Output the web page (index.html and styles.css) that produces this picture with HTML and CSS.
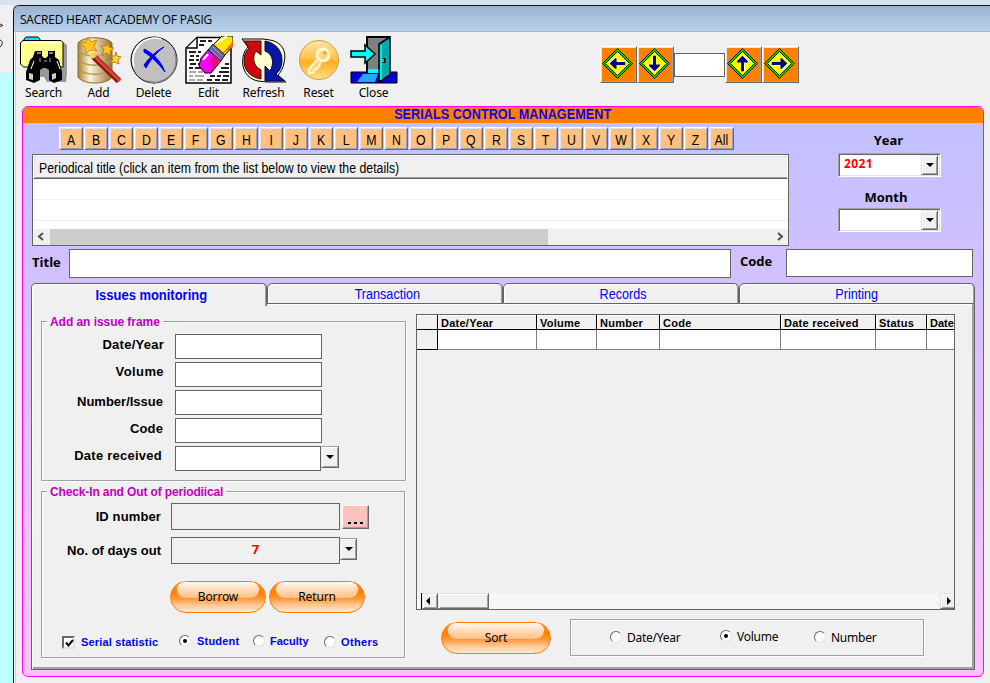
FILE: index.html
```html
<!DOCTYPE html>
<html lang="en">
<head>
<meta charset="utf-8">
<title>Serials Control Management</title>
<link rel="stylesheet" href="styles.css">
</head>
<body>
<div class="desktop">
  <div class="strip">
    <svg width="13" height="68" viewBox="0 0 13 68"><path d="M0 19l3 1.500-3 1M0 35c3 1 3 5 0 7" fill="none" stroke="#222"/></svg>
  </div>
  <main class="window">
    <header class="titlebar"><span class="w-title">SACRED HEART ACADEMY OF PASIG</span></header>
    <div class="toolbar">
      <div class="tools">
        <div class="tool"><svg width="48" height="48" viewBox="0 0 48 48">
          <path d="M42 5l5 4v29l-1 8H27l-3-5H8z" fill="#999"/>
          <path d="M4 5V3l2-2h12l2 2v3H4z" fill="#00e5f5" stroke="#000"/>
          <path d="M0.500 7l2-2.500H41l2 2V31H3.500L.500 28z" fill="#ffff8c" stroke="#000"/>
          <path d="M2 7h39" stroke="#fff"/>
          <path d="M15 15h7v5l2 2h2l2-2v-5h7v6l4 3 3 12v8l-8 3-5-3v-10l-3-2h-3l-3 2v10l-6 3-8-3v-8l4-12 3-3z" fill="#000"/>
          <path d="M17 17h4M29 17h4M14 25l-3 8M37 25l3 8" stroke="#fff"/><path d="M9 37l4 1v6l-4-1zM32 38l4-1v5l-4 2z" fill="#d0d0d0"/><path d="M24 25h3M20 22v4M30 22v4" stroke="#aaa"/>
        </svg><span>Search</span></div>
        <div class="tool"><svg width="48" height="48" viewBox="0 0 48 48">
          <defs><linearGradient id="gold"><stop offset="0" stop-color="#a88035"/><stop offset=".35" stop-color="#fff6dc"/><stop offset="1" stop-color="#967239"/></linearGradient></defs>
          <path d="M3 7c5-7 29-7 34 0v34c-5 8-29 8-34 0z" fill="url(#gold)" stroke="#8b6527"/>
          <path d="M3 15c8 7 26 7 34 0M3 24c8 7 26 7 34 0M3 33c8 7 26 7 34 0" fill="none" stroke="#b69553" stroke-width="1.500"/>
          <path d="M13 1l3 5 6-2-3 6 3 5-6-1-5 4-1-7-5-3 6-2z" fill="#ffc71d" stroke="#cc8e16"/>
          <path d="M33 6l1 5 5 1-4 3 1 5-4-3-5 2 2-5-3-4 5 0z" fill="#ffc71d" stroke="#bd7e16"/>
          <path d="M41 16l1 4 4 1-3 3 1 4-4-2-4 1 2-4-2-3 4 0z" fill="#ffd638" stroke="#bd7e16"/>
          <path d="M18 20L44 45" stroke="#8d1711" stroke-width="6"/><path d="M18 19L45 45" stroke="#dc4634" stroke-width="3"/><path d="M14 18l5-2 3 4-5 3z" fill="#ffd14b"/>
        </svg><span>Add</span></div>
        <div class="tool"><svg width="48" height="48" viewBox="0 0 48 48">
          <circle cx="24" cy="24" r="23" fill="#c0c0c0" stroke="#000"/><path d="M4 31A22 22 0 0 1 31 3" fill="none" stroke="#fff" stroke-width="1.500"/><path d="M45 17A22 22 0 0 1 17 45" fill="none" stroke="#888" stroke-width="1.500"/>
          <path d="M14 13c9 4 17 12 21 23-7-9-13-15-21-20zM34 11c-8 6-13 12-18 21l-2-3c5-7 12-14 20-18z" fill="#0000f2" stroke="#0000f2"/>
        </svg><span>Delete</span></div>
        <div class="tool"><svg width="48" height="48" viewBox="0 0 48 48">
          <path d="M12 1.500H46V47H1V12z" fill="#fff" stroke="#000" stroke-width="1.500"/><path d="M12 2v10H2" fill="#fff" stroke="#000" stroke-width="1.500"/>
          <path d="M15 5h6m2 0h4M14 9h5M4 16h7m2 0h3M5 20h4m2 0h3M4 24h5m2 0h3M5 28h6m2 0h3M4 32h4m2 0h6M40 28h4M36 32h8" stroke="#222" stroke-width="2"/>
          <path d="M4 36h7m2 0h5M4 40h4m2 0h9M4 44h6m2 0h6" stroke="#aaa" stroke-width="2"/><path d="M34 36h10M25 40h5m2 0h4m2 0h6M22 44h5m3 0h5m2 0h6" stroke="#222" stroke-width="2"/>
          <path d="M28 9L37 0H48V10L38 21z" fill="#ffe900" stroke="#000"/><path d="M37 18L48 5v6z" fill="#f36b00"/><path d="M32 7L42 0" stroke="#fff" stroke-width="2"/>
          <path d="M28 8L40 19 36 25 23 14z" fill="#6464ba" stroke="#222"/><path d="M28 11l9 9M26 14l9 9" stroke="#d9c51b" stroke-dasharray="2 1"/>
          <path d="M23 14l-7 8-2 8 6 7h6l10-12z" fill="#ff00f6" stroke="#000"/><path d="M29 19l7 6-10 11c2-5 0-8-1-10z" fill="#e0137c"/><path d="M18 24l5-6" stroke="#fff" stroke-width="2"/>
        </svg><span>Edit</span></div>
        <div class="tool"><svg width="48" height="48" viewBox="0 0 48 48">
          <path d="M2 3h21l7 1c12 2 17 11 14 23-1 5-3 9-6 12l8 7H27l-9-1C7 43 1 33 3 21c1-5 3-8 5-10z" fill="#ffffcb" stroke="#000"/>
          <path d="M4 5h17v14l-5-4c-4 6-3 15 5 19v9C9 41 4 33 4 25c0-6 2-10 5-13z" fill="#ce0710" stroke="#42070a"/>
          <path d="M25 5c11 2 17 10 17 19 0 6-2 11-6 14l8 7H25V30l5 5c4-6 4-17-5-20z" fill="#0816a0" stroke="#030652"/>
        </svg><span>Refresh</span></div>
        <div class="tool"><svg width="48" height="48" viewBox="0 0 48 48">
          <defs><linearGradient id="orb" x2="0" y2="1"><stop stop-color="#ffe7a9"/><stop offset=".45" stop-color="#ffc34e"/><stop offset=".55" stop-color="#ffaf22"/><stop offset="1" stop-color="#ffe28c"/></linearGradient></defs>
          <circle cx="24" cy="24" r="19.500" fill="url(#orb)" stroke="#d59a3d"/><circle cx="28" cy="19" r="6" fill="#ffd77c" stroke="#fff5ce" stroke-width="3"/><path d="M23 23L14 33v4h4l1-3 3-1 4-6" fill="#ffd77c" stroke="#fff5ce" stroke-width="2"/><circle cx="30" cy="17" r="2" fill="#f1aa39"/>
        </svg><span>Reset</span></div>
        <div class="tool"><svg width="48" height="48" viewBox="0 0 48 48">
          <path d="M1 36h46v11H1z" fill="#0000d8" stroke="#000"/><path d="M17 1h22v35H17z" fill="#808080" stroke="#000" stroke-width="2"/><path d="M18 33h11v4H18z" fill="#00ffff"/><path d="M13 38h15l-3 8H7z" fill="#28a5ff"/>
          <path d="M29 8L40 1v38l-11 7z" fill="#00a9aa" stroke="#000" stroke-width="1.500"/><path d="M31 9v35" stroke="#00ffff" stroke-width="1.500"/><path d="M34 22v5" stroke="#000" stroke-width="3"/><path d="M33 23v3" stroke="#fff"/>
          <path d="M1 15h14V9l10 9-10 9v-6H1z" fill="#00ffff" stroke="#000" stroke-width="1.500"/>
        </svg><span>Close</span></div>
      </div>
      <div class="nav">
        <button class="navbtn"><svg class="left" viewBox="0 0 32 32"><use href="#sign"/></svg></button>
        <button class="navbtn"><svg class="down" viewBox="0 0 32 32"><use href="#sign"/></svg></button>
        <div class="navbox"></div>
        <button class="navbtn"><svg class="up" viewBox="0 0 32 32"><use href="#sign"/></svg></button>
        <button class="navbtn"><svg viewBox="0 0 32 32"><g id="sign"><path d="M16 .500L31.500 16 16 31.500.500 16z" fill="#00d900" stroke="#000"/><path d="M16 3.500L28.500 16 16 28.500 3.500 16z" fill="#ff0" stroke="#000"/><path d="M9 15.500h8v-4h2l6 5.500-6 5.500h-2v-4H9z" fill="#fff"/><path d="M8 14.500h9v-4h1.500l5.500 5.500-5.500 5.500H17v-4H8z" fill="#000080"/></g></svg></button>
      </div>
    </div>

    <section class="panel">
      <h1><span>SERIALS CONTROL MANAGEMENT</span></h1>
      <div class="top">
        <div class="browse">
          <div class="letters"><button><span>A</span></button><button><span>B</span></button><button><span>C</span></button><button><span>D</span></button><button><span>E</span></button><button><span>F</span></button><button><span>G</span></button><button><span>H</span></button><button><span>I</span></button><button><span>J</span></button><button><span>K</span></button><button><span>L</span></button><button><span>M</span></button><button><span>N</span></button><button><span>O</span></button><button><span>P</span></button><button><span>Q</span></button><button><span>R</span></button><button><span>S</span></button><button><span>T</span></button><button><span>U</span></button><button><span>V</span></button><button><span>W</span></button><button><span>X</span></button><button><span>Y</span></button><button><span>Z</span></button><button class="all"><span>All</span></button></div>
          <div class="list">
            <div class="list-head"><span>Periodical title (click an item from the list below to view the details)</span></div>
            <div class="list-row"></div><div class="list-row"></div><div class="list-rest"></div>
            <div class="list-scroll"><svg width="17" height="16"><path d="M10 4L6 7.500 10 11" fill="none" stroke="#505050" stroke-width="2"/></svg><div class="list-thumb"></div><svg width="17" height="16"><path d="M7 4l4 3.500L7 11" fill="none" stroke="#505050" stroke-width="2"/></svg></div>
          </div>
        </div>
        <div class="period">
          <div class="plabel">Year</div>
          <div class="combo"><b>2021</b><i class="drop"></i></div>
          <div class="plabel month">Month</div>
          <div class="combo"><b></b><i class="drop"></i></div>
        </div>
      </div>
      <div class="titlerow"><span class="title-label">Title</span><div class="box title-box"></div><span class="code-label">Code</span><div class="box code-box"></div></div>

      <div class="tabs">
        <div class="tab active"><span>Issues monitoring</span></div><div class="tab"><span>Transaction</span></div><div class="tab"><span>Records</span></div><div class="tab last"><span>Printing</span></div>
      </div>
      <div class="page">
        <div class="forms">
          <div class="frame add">
            <div class="legend"><span>Add an issue frame</span></div>
            <div class="field"><label class="r1">Date/Year</label><div class="box"></div></div>
            <div class="field"><label class="r2">Volume</label><div class="box"></div></div>
            <div class="field"><label class="r3">Number/Issue</label><div class="box"></div></div>
            <div class="field"><label class="r4">Code</label><div class="box"></div></div>
            <div class="field"><label class="r5">Date received</label><div class="box date"></div><i class="drop framed"></i></div>
          </div>
          <div class="frame check">
            <div class="legend"><span class="tight">Check-In and Out of periodiical</span></div>
            <div class="loan"><label class="id">ID number</label><div class="box"></div><button class="dots"><i></i><i></i><i></i></button></div>
            <div class="loan days"><label>No. of days out</label><div class="box">7</div><i class="drop framed"></i></div>
            <div class="pills"><button class="pill"><span>Borrow</span></button><button class="pill"><span>Return</span></button></div>
            <div class="choices">
              <span class="checkbox"><svg width="9" height="9"><path d="M1 3.500l2.500 3L8 1" fill="none" stroke="#000" stroke-width="2"/></svg></span><span class="c-stat">Serial statistic</span>
              <span class="radio on"></span><span class="c-stu">Student</span>
              <span class="radio"></span><span class="c-fac">Faculty</span>
              <span class="radio low"></span><span class="c-oth">Others</span>
            </div>
          </div>
        </div>
        <div class="results">
          <div class="grid">
            <div class="cols head"><div></div><div>Date/Year</div><div>Volume</div><div>Number</div><div>Code</div><div>Date received</div><div>Status</div><div>Date</div></div>
            <div class="cols data"><div></div><div></div><div></div><div></div><div></div><div></div><div></div><div></div></div>
            <div class="void"></div>
            <div class="gscroll"><div class="split"></div><div class="sbtn"><svg width="5" height="8"><path d="M4 0v8L0 4z"/></svg></div><div class="sthumb"></div><div class="strack"></div><div class="sbtn end"><svg width="5" height="8"><path d="M1 0v8l4-4z"/></svg></div></div>
          </div>
          <div class="sortrow">
            <button class="pill sort"><span>Sort</span></button>
            <div class="sortbox"><span class="radio"></span><span class="s1">Date/Year</span><span class="radio on"></span><span class="s2">Volume</span><span class="radio"></span><span class="s3">Number</span></div>
          </div>
        </div>
      </div>
    </section>
  </main>
</div>
</body>
</html>
```
FILE: styles.css
```css
* { box-sizing: border-box; }
body { margin: 0; width: 990px; height: 683px; overflow: hidden; font-family: "Liberation Sans", sans-serif; color: #000; }
button { padding: 0; margin: 0; font: inherit; color: inherit; border-radius: 0; }
svg { display: block; }
span, label { white-space: nowrap; }
.desktop { display: flex; height: 683px; padding-top: 5px; background: #d7e3f1; }
.strip { width: 13px; flex: none; background: linear-gradient(#f0f0f0 0 68px, #c0ffff 68px); }
.window { flex: 1; height: 690px; border: solid #111; border-width: 1px 0 0 1px; border-radius: 6px 0 0 0; background: #f0f0f0; box-shadow: inset 1px 0 #fff, inset 2px 0 #b9cde5; overflow: hidden; }
.titlebar { height: 26px; padding: 5px 0 0 6px; background: linear-gradient(#99b4d1, #b9d1ea); font: 12px/18px "Open Sans", sans-serif; border-bottom: 1px solid #a4b8cd; }
.w-title { display: inline-block; letter-spacing: -.23px; }

.toolbar { height: 74px; display: flex; padding: 4px 0 0 2px; }
.tools { display: flex; width: 584px; }
.tool { width: 55px; display: flex; flex-direction: column; align-items: center; font: 12px/18px "Noto Sans", sans-serif; letter-spacing: -.15px; }
.tool svg { margin-left: 0; }
.nav { display: flex; padding-top: 10px; gap: 0; align-items: flex-start; }
.navbtn { width: 37px; height: 37px; background: #ff8000; border: 1px solid; border-color: #fff #696969 #696969 #fff; box-shadow: inset 1px 1px #e3e3e3, inset -1px -1px #a0a0a0; display: grid; place-items: center; }
.navbtn svg { width: 31px; height: 31px; margin: -2px 0 0 -2px; }
.left { transform: rotate(180deg); } .down { transform: rotate(90deg); } .up { transform: rotate(-90deg); }
.navbox { width: 51px; height: 24px; margin-top: 7px; background: #fff; border: 1px solid #646464; }

.panel { width: 962px; height: 571px; margin-left: 8px; border: 1px solid #f0f; border-radius: 6px; background: linear-gradient(#c0c0ff, #ffc0ff); overflow: hidden; }
h1 { margin: 0; height: 16px; background: #ff8000; color: #1200e8; font: bold 14px/15px "Liberation Sans", sans-serif; text-align: center; }
h1 span { display: inline-block; transform: scaleX(.907); }
.top { display: flex; height: 126px; padding: 4px 0 0 9px; }
.browse { width: 757px; }
.letters { display: flex; gap: 1px; padding-left: 27px; }
.letters button { width: 24px; height: 23px; background: #ffc080; border: 1px solid; border-color: #fff #696969 #696969 #fff; box-shadow: inset 1px 1px #e3e3e3, inset -1px -1px #a0a0a0; font-size: 15px; line-height: 23px; text-align: center; }
.letters span { display: inline-block; transform: scaleX(.82); margin: 0 -3px; }
.letters .all { width: 25px; }
.list { margin-top: 4px; height: 92px; border: 1px solid #646464; background: #fff; }
.list-head { height: 24px; background: #f0f0f0; border: 1px solid #fff; border-bottom: 1px solid #646464; box-shadow: inset 1px 1px #e3e3e3, inset 0 -1px #a0a0a0; font-size: 14px; line-height: 25px; padding-left: 5px; }
.list-head span { display: inline-block; transform: scaleX(.88); transform-origin: 0 50%; }
.list-row { height: 21px; border-bottom: 1px solid #f0f0f0; }
.list-rest { height: 8px; }
.list-scroll { height: 16px; display: flex; justify-content: space-between; background: #f0f0f0; }
.list-thumb { width: 498px; margin-right: auto; background: #cdcdcd; }
.period { width: 103px; margin-left: 49px; display: flex; flex-direction: column; }
.plabel { height: 26px; padding-left: 1px; margin-left: -3px; font: bold 13px/26px "Open Sans", sans-serif; text-align: center; }
.plabel.month { height: 31px; line-height: 40px; margin-left: -8px; }
.combo { height: 24px; display: flex; justify-content: space-between; background: #fff; border: 1px solid; border-color: #a0a0a0 #fff #fff #a0a0a0; box-shadow: inset 1px 1px #696969, inset -1px -1px #e3e3e3; padding: 1px 2px 2px 2px; }
.combo b { color: #f00; font: bold 12px/18px "Open Sans", sans-serif; letter-spacing: .4px; padding-left: 3px; }
.drop { display: grid; place-items: center; width: 17px; height: 20px; background: #f0f0f0; border: 1px solid; border-color: #e3e3e3 #696969 #696969 #e3e3e3; box-shadow: inset 1px 1px #fff, inset -1px -1px #a0a0a0; }
.drop::after { content: ""; border: solid transparent; border-width: 4px 4px 0; border-top-color: #000; }
.combo .drop { height: 20px; }
.titlerow { display: flex; height: 34px; padding-left: 9px; font: bold 13px/26px "Open Sans", sans-serif; }
.box { background: #fff; border: 1px solid #646464; }
.title-label { width: 37px; } .title-box { width: 662px; height: 29px; }
.code-label { width: 46px; margin-left: 9px; line-height: 25px; } .code-box { width: 187px; height: 28px; }

.tabs { display: flex; margin-left: 8px; height: 21px; width: 944px; }
.tab { width: 236px; height: 21px; border: 1px solid #646464; border-radius: 5px 5px 0 0; background: #f0f0f0; box-shadow: inset 1px 1px #fff, inset -1px 0 #a0a0a0; color: #00f; font-size: 14px; line-height: 20px; text-align: center; padding-left: 5px; }
.tab.last { padding-left: 0; }
.tab span { display: inline-block; transform: scaleX(.9); }
.tab.active { height: 23px; border-bottom: 0; font-weight: bold; line-height: 22px; margin-bottom: -2px; z-index: 1; }
.tab.active span { transform: scaleX(.925); }
.page { display: flex; margin-left: 8px; width: 944px; height: 366px; background: #f0f0f0; border: solid #646464; border-width: 0 1px 1px; box-shadow: inset 1px 0 #fff, inset -2px -2px #a0a0a0, inset 0 1px #fff; padding: 9px 0 0 9px; }
.forms { width: 365px; margin-right: 10px; padding-top: 8px; }
.frame { border: 1px solid #a0a0a0; box-shadow: 1px 1px #fff, inset 1px 1px #fff; }
.add { height: 160px; margin-bottom: 10px; }
.check { height: 167px; width: 364px; }
.legend { height: 13px; margin-top: -7px; padding-left: 5px; display: flex; color: #c000c0; font: bold 12px/15px "Liberation Sans", sans-serif; }
.legend span { background: #f0f0f0; padding: 0 3px; height: 14px; letter-spacing: -.05px; }
.legend .tight { letter-spacing: -.13px; }
.field { display: flex; height: 28px; }
.legend + .field { margin-top: 6px; }
.field label { text-align: right; width: 122px; font: bold 13px/22px "Liberation Sans", sans-serif; letter-spacing: .25px; margin-right: 11px; }
.field .box { width: 147px; height: 25px; }
.field .r2 { line-height: 20px; letter-spacing: .4px; }
.field .r3 { width: 121px; margin-right: 12px; line-height: 24px; letter-spacing: 0; }
.field .r4 { width: 121px; margin-right: 12px; line-height: 22px; letter-spacing: .1px; }
.field .r5 { width: 120px; margin-right: 13px; line-height: 20px; }
.field .date { width: 146px; }
.framed { width: 18px; height: 22px; border: 1px solid; border-color: #a0a0a0 #696969 #696969 #e3e3e3; }
.loan { display: flex; height: 34px; }
.legend + .loan { margin-top: 5px; }
.loan label { width: 119px; margin-right: 10px; text-align: right; font: bold 13px/28px "Liberation Sans", sans-serif; letter-spacing: 0; }
.loan .id { letter-spacing: .12px; }
.loan .box { width: 169px; height: 27px; background: #f0f0f0; color: red; font: bold 13px/23px "Open Sans", sans-serif; text-align: center; }
.dots { width: 27px; height: 24px; margin: 2px 0 0 2px; background: #ffc0c0; border: 1px solid; border-color: #fff #696969 #696969 #fff; box-shadow: inset -1px -1px #a0a0a0; display: flex; gap: 3px; justify-content: center; align-items: flex-end; padding-bottom: 4px; }
.dots i { width: 3px; height: 2px; background: #000; }
.days .framed { width: 17px; margin-top: 1px; }
.pills { display: flex; gap: 3px; padding: 10px 0 0 128px; }
.pill { width: 96px; height: 32px; border: 1px solid #ff8000; border-radius: 16px; background: linear-gradient(#ff9933 0, #ff8000 35%, #ff983a 55%, #ffc58c 75%, #ffe9d2); position: relative; font: 12px/30px "Noto Sans", sans-serif; }
.pill::before { content: ""; position: absolute; left: 6px; right: 6px; top: 0; height: 16px; border-radius: 8px 8px 9px 9px; background: linear-gradient(#fff8ef, #ffbe80); }
.pill span { position: relative; letter-spacing: -.15px; }
.choices { display: flex; padding: 20px 0 0 20px; color: #00f; font: bold 11px/18px "Liberation Sans", sans-serif; align-items: center; letter-spacing: .35px; }
.checkbox { width: 13px; height: 13px; padding: 1px; background: #fff; border: 2px solid; border-color: #696969 #e3e3e3 #e3e3e3 #696969; }
.radio { flex: none; width: 12px; height: 12px; border-radius: 50%; background: #fff; border: 1px solid; border-color: #696969 #e3e3e3 #e3e3e3 #696969; display: grid; place-items: center; }
.radio.on::after { content: ""; width: 4px; height: 4px; border-radius: 50%; background: #000; }
.choices .radio { margin-top: -3px; }
.choices .radio.low { margin-top: 0; }
.c-stat { width: 98px; margin-left: 6px; letter-spacing: .16px; }
.c-stu { width: 56px; margin: -2px 0 0 6px; letter-spacing: .2px; } .c-fac { width: 54px; margin: -2px 0 0 5px; letter-spacing: 0; } .c-oth { margin-left: 5px; }

.results { width: 539px; padding-top: 1px; }
.grid { height: 296px; border: 1px solid #646464; display: flex; flex-direction: column; }
.cols { display: grid; grid-template-columns: 21px 99px 60px 63px 121px 95px 51px 27px; }
.head div { height: 15px; overflow: hidden; border: solid #000; border-width: 0 1px 1px 0; padding-left: 3px; font: bold 11px/17px "Liberation Sans", sans-serif; letter-spacing: .25px; white-space: nowrap; box-shadow: inset 1px 1px #fff; }
.data div { height: 20px; background: #fff; border: solid #808080; border-width: 0 1px 1px 0; }
.data div:first-child { background: #f0f0f0; border-color: #000; }
.head div:last-child, .data div:last-child { border-right: 0; letter-spacing: 0; }
.void { flex: 1; }
.gscroll { height: 16px; display: flex; }
.split { width: 5px; border: solid; border-color: #fff #000 #fff #fff; border-width: 0 1px 0 2px; }
.sbtn, .sthumb { width: 16px; border: 1px solid; border-color: #e3e3e3 #696969 #696969 #e3e3e3; box-shadow: inset 1px 1px #fff, inset -1px -1px #a0a0a0; display: grid; place-items: center; }
.sbtn svg { margin-left: -3px; }
.sthumb { width: 51px; }
.strack { flex: 1; background: repeating-conic-gradient(#fff 0 25%, #f0f0f0 0 50%) 0 0 / 2px 2px; }
.sbtn.end { width: 14px; border-right: 0; box-shadow: inset 1px 1px #fff, inset 0 -1px #a0a0a0; }
.sbtn.end svg { margin-left: 2px; }
.sortrow { display: flex; padding: 9px 0 0 25px; }
.sort { width: 110px; margin: 3px 19px 0 0; }
.sortbox { width: 354px; height: 37px; border: 1px solid #a0a0a0; box-shadow: 1px 1px #fff, inset 1px 1px #fff; display: flex; align-items: center; padding-left: 39px; font: 12px/20px "Noto Sans", sans-serif; letter-spacing: -.25px; }
.sortbox .radio { margin-bottom: 2px; }
.sortbox .radio.on { margin: 0 0 3px -1px; }
.s1 { width: 94px; margin-left: 5px; } .s2 { width: 77px; margin: 0 0 1px 5px; } .s3 { margin-left: 5px; }
```
